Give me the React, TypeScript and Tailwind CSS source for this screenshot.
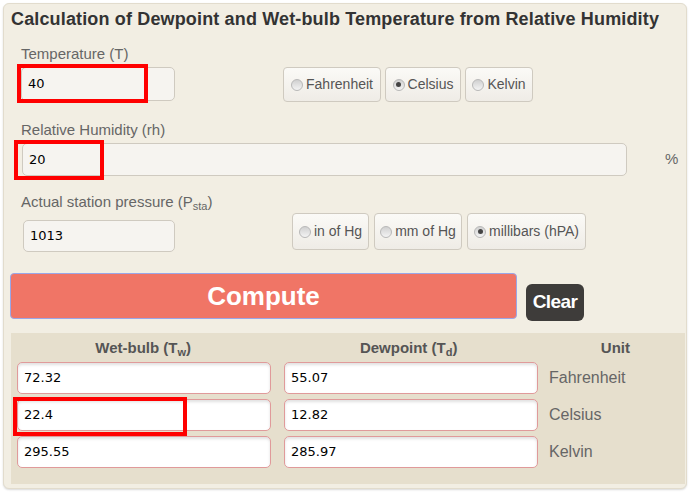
import React from "react";

function Radio({ label, checked, w }: { label: string; checked?: boolean; w: string }) {
  return (
    <div
      className={`${w} h-full flex items-center justify-center gap-[3px] rounded-[4px] border border-[#cfcac0] bg-gradient-to-b from-[#fbfaf7] to-[#efece6] text-[#555] text-[14px]`}
    >
      <span className="w-[12px] h-[12px] rounded-full border border-[#b8b8b8] bg-gradient-to-b from-[#d0d0d0] to-[#f4f4f4] flex items-center justify-center">
        {checked && <span className="w-[5px] h-[5px] rounded-full bg-[#444]" />}
      </span>
      <span>{label}</span>
    </div>
  );
}

function Hl({ className }: { className: string }) {
  return <div className={`absolute border-[4px] border-[#ff0000] pointer-events-none ${className}`} />;
}

export default function App() {
  const field = "rounded-[5px] border border-[#cfcac0] bg-[#f6f4f0] px-[6px] flex items-center text-[13px] text-black font-['DejaVu_Sans',sans-serif]";
  const result = "w-[254px] h-[32px] rounded-[5px] border border-[#e09a9a] bg-white shadow-[inset_0_2px_3px_rgba(0,0,0,0.12)] px-[6px] flex items-center text-[13px] text-black font-['DejaVu_Sans',sans-serif]";

  const rows = [
    { wb: "72.32", dp: "55.07", unit: "Fahrenheit" },
    { wb: "22.4", dp: "12.82", unit: "Celsius" },
    { wb: "295.55", dp: "285.97", unit: "Kelvin" },
  ];

  return (
    <div className="w-[691px] h-[494px] bg-white pt-[3px] pl-[3px] font-['Liberation_Sans',Arial,sans-serif]">
      <div className="relative w-[684px] h-[486px] rounded-[6px] border border-[#e2dccd] bg-[#f2eee3] shadow-[0_1px_2px_rgba(0,0,0,0.15)]">
        <h1 className="pl-[7px] pt-[5px] text-[18px] leading-[20px] tracking-[0.15px] font-bold text-[#333] whitespace-nowrap">
          Calculation of Dewpoint and Wet-bulb Temperature from Relative Humidity
        </h1>

        {/* Temperature */}
        <div className="mt-[16px] pl-[17px] flex items-end">
          <div className="w-[155px]">
            <div className="text-[15px] leading-[17px] text-[#666]">Temperature (T)</div>
            <div className={`${field} mt-[5px] h-[34px] w-[154px]`}>40</div>
          </div>
          <div className="ml-[107px] h-[35px] mb-[-1px] flex gap-[4px]">
            <Radio label="Fahrenheit" w="w-[98px]" />
            <Radio label="Celsius" checked w="w-[76px]" />
            <Radio label="Kelvin" w="w-[68px]" />
          </div>
        </div>

        {/* Relative humidity */}
        <div className="mt-[20px] pl-[17px]">
          <div className="text-[15px] leading-[17px] text-[#666]">Relative Humidity (rh)</div>
          <div className="mt-[5px] flex items-center">
            <div className={`${field} h-[33px] w-[605px] ml-[1px]`}>20</div>
            <span className="ml-[38px] text-[15px] text-[#666]">%</span>
          </div>
        </div>

        {/* Pressure */}
        <div className="mt-[17px] pl-[17px] flex items-end">
          <div className="w-[160px]">
            <div className="text-[15px] leading-[17px] text-[#666] whitespace-nowrap">
              Actual station pressure (P<sub className="text-[11px]">sta</sub>)
            </div>
            <div className={`${field} mt-[10px] h-[32px] w-[152px] ml-[2px]`}>1013</div>
          </div>
          <div className="ml-[111px] h-[37px] mb-[2px] flex gap-[5px]">
            <Radio label="in of Hg" w="w-[77px]" />
            <Radio label="mm of Hg" w="w-[88px]" />
            <Radio label="millibars (hPA)" checked w="w-[119px]" />
          </div>
        </div>

        {/* Buttons */}
        <div className="mt-[21px] pl-[6px] flex items-start">
          <button className="w-[507px] h-[46px] rounded-[4px] border border-[#9aa6e8] bg-[#f07566] text-white text-[26px] font-bold">
            Compute
          </button>
          <button className="ml-[9px] mt-[11px] w-[58px] h-[37px] rounded-[6px] bg-[#3e3c3a] text-white text-[19px] font-bold tracking-[-0.6px]">
            Clear
          </button>
        </div>

        {/* Results */}
        <div className="mt-[12px] ml-[7px] w-[674px] h-[151px] bg-[#e6dfcd] pl-[6px] pt-[3px]">
          <div className="flex h-[24px] items-center text-[15px] font-bold text-[#555]">
            <div className="w-[254px] text-center">
              Wet-bulb (T<sub className="text-[11px]">w</sub>)
            </div>
            <div className="ml-[13px] w-[254px] text-center">
              Dewpoint (T<sub className="text-[11px]">d</sub>)
            </div>
            <div className="ml-[11px] w-[140px] text-center">Unit</div>
          </div>
          <div className="mt-[2px] flex flex-col gap-[5px]">
            {rows.map((r) => (
              <div key={r.unit} className="flex items-center">
                <div className={result}>{r.wb}</div>
                <div className={`${result} ml-[13px]`}>{r.dp}</div>
                <div className="ml-[11px] text-[16px] text-[#666]">{r.unit}</div>
              </div>
            ))}
          </div>
        </div>

        <Hl className="left-[13px] top-[60px] w-[131px] h-[39px]" />
        <Hl className="left-[10px] top-[136px] w-[90px] h-[40px]" />
        <Hl className="left-[9px] top-[393px] w-[174px] h-[39px]" />
      </div>
    </div>
  );
}
